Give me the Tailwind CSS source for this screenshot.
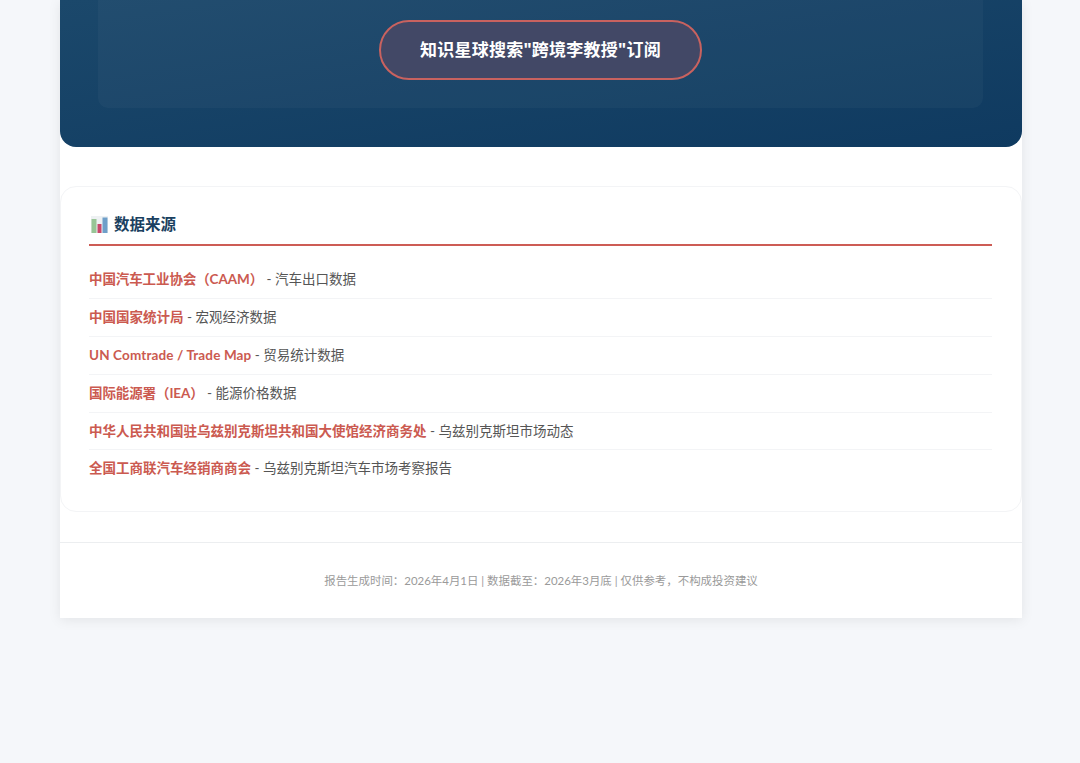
<!DOCTYPE html>
<html lang="zh-CN">
<head>
<meta charset="utf-8">
<script src="https://cdn.jsdelivr.net/npm/@tailwindcss/browser@4"></script>
</head>
<body class="bg-[#f5f7fa] font-['Lato','Noto_Sans_CJK_SC',sans-serif] h-[763px] overflow-hidden">
<div class="ml-[60px] w-[962px] bg-white shadow-[0_2px_12px_rgba(0,0,0,0.08)] h-[618px]">
  <section class="h-[147px] rounded-b-[16px] bg-gradient-to-br from-[#1b486b] to-[#0f3a60] pl-[38px] pr-[39px]">
    <div class="h-[108px] rounded-b-[10px] bg-white/[0.03] pt-[20px] flex justify-center items-start">
      <div class="h-[60px] w-[323px] rounded-full border-2 border-[#c9625f] bg-[#424866] flex items-center justify-center text-white font-bold text-[17px] tracking-[0.25px] font-['Noto_Sans','Noto_Sans_CJK_SC',sans-serif]">知识星球搜索"跨境李教授"订阅</div>
    </div>
  </section>
  <section class="mt-[39px] h-[326px] rounded-[16px] border border-[#f3f4f6] pl-[28px] pr-[29px] pt-[21px]">
    <div class="h-[33px] border-b-2 border-[#cd5c55] pb-[3px] box-content flex items-center gap-[6px] pl-[2px] text-[#1a3f60] font-bold text-[15.5px]">
      <svg class="w-[17px] h-[17px]" viewBox="0 0 17 17" aria-hidden="true">
        <rect x="0" y="0" width="17" height="17" fill="#eef1f3"/>
        <rect x="0.5" y="3" width="5" height="14" fill="#98c596"/>
        <rect x="6.5" y="8" width="4" height="9" fill="#c9486b"/>
        <rect x="11.5" y="1.5" width="5" height="15.5" fill="#6f9fc9"/>
      </svg>
      <span>数据来源</span>
    </div>
    <ul class="mt-[15px] text-[13.5px] text-[#555]">
      <li class="h-[38px] flex items-center border-b border-[#f3f4f6] whitespace-pre"><b class="text-[#cb5a50] font-bold tracking-[-0.1px]">中国汽车工业协会（CAAM）</b> - 汽车出口数据</li>
      <li class="h-[38px] flex items-center border-b border-[#f3f4f6] whitespace-pre"><b class="text-[#cb5a50] font-bold">中国国家统计局</b> - 宏观经济数据</li>
      <li class="h-[38px] flex items-center border-b border-[#f3f4f6] whitespace-pre"><b class="text-[#cb5a50] font-bold tracking-[0.13px]">UN Comtrade / Trade Map</b> - 贸易统计数据</li>
      <li class="h-[38px] flex items-center border-b border-[#f3f4f6] whitespace-pre"><b class="text-[#cb5a50] font-bold tracking-[-0.1px]">国际能源署（IEA）</b> - 能源价格数据</li>
      <li class="h-[37px] flex items-center border-b border-[#f3f4f6] whitespace-pre"><b class="text-[#cb5a50] font-bold">中华人民共和国驻乌兹别克斯坦共和国大使馆经济商务处</b> - 乌兹别克斯坦市场动态</li>
      <li class="h-[37px] flex items-center whitespace-pre"><b class="text-[#cb5a50] font-bold">全国工商联汽车经销商商会</b> - 乌兹别克斯坦汽车市场考察报告</li>
    </ul>
  </section>
  <footer class="mt-[30px] border-t border-[#eceef0] pt-[30px] text-center text-[11.45px] leading-[16px] text-[#9a9a9a]">报告生成时间：2026年4月1日 | 数据截至：2026年3月底 | 仅供参考，不构成投资建议</footer>
</div>
</body>
</html>
